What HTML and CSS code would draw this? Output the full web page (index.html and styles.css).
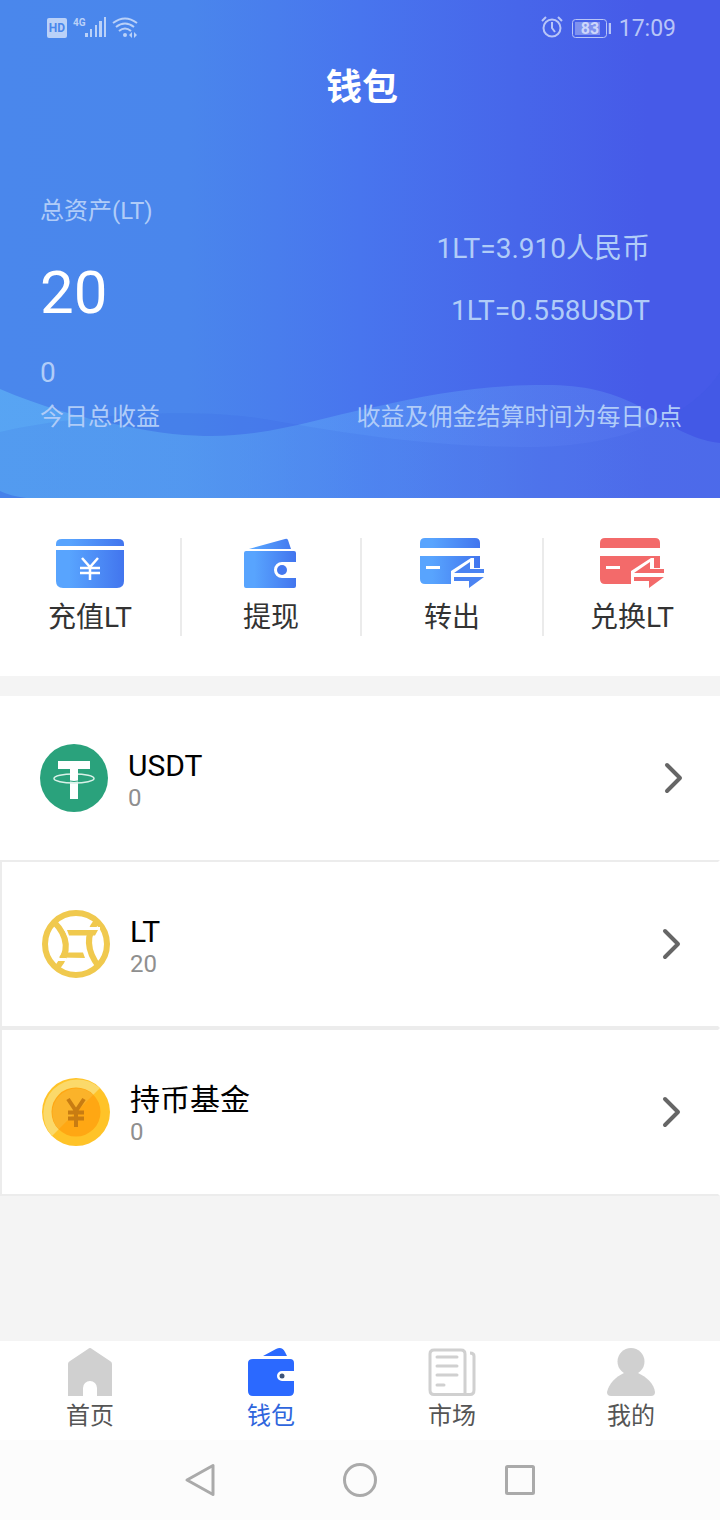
FILE: index.html
```html
<!DOCTYPE html>
<html lang="zh-CN">
<head>
<meta charset="utf-8">
<meta name="viewport" content="width=device-width, initial-scale=1">
<title>钱包</title>
<link rel="stylesheet" href="styles.css">
</head>
<body>
<svg class="defs" width="0" height="0" aria-hidden="true">
  <defs>
    <linearGradient id="blue" x1="0" y1="0" x2="1" y2="0">
      <stop offset="0.2" stop-color="#58a4fe"/><stop offset="1" stop-color="#4275ee"/>
    </linearGradient>
    <linearGradient id="wave" x1="0" y1="0" x2="1" y2="0">
      <stop offset="0" stop-color="#70d8ff" stop-opacity=".36"/>
      <stop offset="0.25" stop-color="#70d0ff" stop-opacity=".36"/>
      <stop offset="0.5" stop-color="#70c8ff" stop-opacity=".28"/>
      <stop offset="0.75" stop-color="#80c8ff" stop-opacity=".2"/>
      <stop offset="1" stop-color="#80c8ff" stop-opacity=".18"/>
    </linearGradient>
  </defs>
</svg>
<header class="hero">
  <svg class="waves" viewBox="0 0 720 130" preserveAspectRatio="none" aria-hidden="true">
    <path fill="url(#wave)" d="M0 21C40 38 80 50 120 57C160 66 190 68 212 68C270 68 320 50 370 40C430 26 480 17 545 17C585 17 610 24 635 36C665 54 690 72 720 75V130H26Q10 128 0 123Z"/>
    <path fill="#304fdd" fill-opacity=".11" d="M0 64C70 48 190 38 270 52C350 66 430 79 530 79C620 79 690 50 720 4V130H0Z"/>
  </svg>
  <div class="statusbar">
    <div class="status-group">
      <svg width="92" height="26" viewBox="0 1 92 26" fill="#bad1f8" aria-hidden="true">
        <rect x="0" y="3" width="20" height="20" rx="2"/>
        <text class="glyph-hd" x="10" y="17" text-anchor="middle">HD</text>
        <text class="glyph-4g" x="26" y="11">4G</text>
        <path d="M38 18h3v4h-3zM43 14h2v8h-2zM48 10h2v12h-2zM52 6h3v16h-3zM57 2h2v20h-2z"/>
        <g fill="none" stroke="#bad1f8" stroke-width="2"><path d="M66 8Q78-1 90 8M69 12Q78 5 87 12M72 16Q78 11 84 16"/></g>
        <circle cx="78" cy="20" r="2"/><path d="M82 20l3-3v6zM90 20l-3-3v6z"/>
      </svg>
    </div>
    <div class="status-group">
      <svg width="70" height="26" viewBox="0 1 70 26" fill="none" stroke="#b8c5f7" aria-hidden="true">
        <circle cx="11" cy="13" r="8.500" stroke-width="2"/><path stroke-width="2" d="M11 7v6l3 4M1 6l4-4M17 2l4 4"/>
        <rect x="31.500" y="4.500" width="34" height="18" rx="3" stroke-width="1"/>
        <rect x="34" y="7" width="25" height="13" fill="#7f92ef" stroke="none"/>
        <text class="glyph-battery" x="49" y="19" text-anchor="middle">83</text>
        <path stroke-width="2.500" d="M69 8v11"/>
      </svg>
      <time>17:09</time>
    </div>
  </div>
  <h1>钱包</h1>
  <div class="assets">
    <div class="total">
      <p class="caption">总资产(LT)</p>
      <p class="amount">20</p>
    </div>
    <div class="rates">
      <p>1LT=3.910人民币</p>
      <p>1LT=0.558USDT</p>
    </div>
  </div>
  <p class="income">0</p>
  <div class="notes"><span>今日总收益</span><span>收益及佣金结算时间为每日0点</span></div>
</header>

<nav class="actions" aria-label="操作">
  <button type="button">
    <svg width="68" height="50" viewBox="0 0 68 50" aria-hidden="true">
      <path fill="url(#blue)" d="M0 8V6Q0 1 6 1H62Q68 1 68 6V8ZM0 12H68V43Q68 50 61 50H7Q0 50 0 43Z"/>
      <path fill="none" stroke="#fff" stroke-width="2.500" d="M26 20l8 9 8-9M24 30h20M24 35h20M34 29v13"/>
    </svg>
    <span>充值LT</span>
  </button>
  <button type="button">
    <svg width="54" height="50" viewBox="0 0 54 50" aria-hidden="true">
      <path fill="url(#blue)" d="M5 11L41 1Q43 0 44 2L47 11ZM2 13H50Q52 13 52 15V24H38A8 8 0 0 0 38 40H52V48Q52 50 50 50H2Q0 50 0 48V15Q0 13 2 13Z"/>
      <circle cx="38" cy="32" r="5" fill="#4478ef"/>
    </svg>
    <span>提现</span>
  </button>
  <button type="button">
    <svg width="64" height="50" viewBox="0 0 64 50" aria-hidden="true">
      <path fill="url(#blue)" d="M0 10V5Q0 0 5 0H55Q60 0 60 5V10ZM0 18H60V30H54V20H51L31 33V46H5Q0 46 0 41ZM6 28V31H20V28Z" fill-rule="evenodd"/>
      <path fill="#4b83f2" d="M34 35L50 24V31H64V35ZM34 39H64L49 50V43H34Z"/>
    </svg>
    <span>转出</span>
  </button>
  <button type="button">
    <svg width="64" height="50" viewBox="0 0 64 50" fill="#f36a6a" aria-hidden="true">
      <path d="M0 10V5Q0 0 5 0H55Q60 0 60 5V10ZM0 18H60V30H54V20H51L31 33V46H5Q0 46 0 41ZM6 28V31H20V28Z" fill-rule="evenodd"/>
      <path d="M34 35L50 24V31H64V35ZM34 39H64L49 50V43H34Z"/>
    </svg>
    <span>兑换LT</span>
  </button>
</nav>

<main class="coins">
  <a class="coin" href="#usdt">
    <svg width="68" height="68" viewBox="0 0 68 68" aria-hidden="true">
      <circle cx="34" cy="34" r="34" fill="#2aa27c"/>
      <path fill="#fff" d="M18 17H50V25H38V55H30V25H18Z"/>
      <ellipse cx="34" cy="34.500" rx="20" ry="4.500" fill="none" stroke="#d9f1e8" stroke-width="1.500"/>
      <path fill="#fff" d="M30 26h8v10h-8z"/>
      <path fill="none" stroke="#2aa27c" stroke-width="1" d="M30 37Q34 38 38 37"/>
    </svg>
    <span class="coin-text"><span class="coin-name">USDT</span><span class="coin-value">0</span></span>
    <svg class="chevron" width="20" height="32" viewBox="0 0 20 32" aria-hidden="true"><path d="M3 3L16 16L3 29"/></svg>
  </a>
  <a class="coin coin-boxed" href="#lt">
    <svg width="68" height="68" viewBox="0 0 68 68" fill="none" stroke="#f0c94e" aria-hidden="true">
      <circle cx="34" cy="34" r="31" stroke-width="6"/>
      <path stroke-width="6" d="M12 12Q34 34 15 58M55 11Q38 32 57 57"/>
      <path stroke="#fff" stroke-width="3" d="M44 18.500H58M12 49.500H24"/>
      <path stroke="#fff" stroke-width="2" d="M22 17L27 27M42 43L46 51"/>
      <path fill="#f0c94e" stroke="none" d="M25 20H56L53 25.500H27ZM17 47.500L20 42.500H41L43 48Z"/>
    </svg>
    <span class="coin-text"><span class="coin-name">LT</span><span class="coin-value">20</span></span>
    <svg class="chevron" width="20" height="32" viewBox="0 0 20 32" aria-hidden="true"><path d="M3 3L16 16L3 29"/></svg>
  </a>
  <a class="coin coin-boxed" href="#fund">
    <svg width="68" height="68" viewBox="0 0 68 68" aria-hidden="true">
      <circle cx="34" cy="34" r="34" fill="#ffc328"/>
      <path fill="#fbd96a" d="M10 58A34 34 0 0 1 58 10Z"/>
      <circle cx="34" cy="34" r="24.500" fill="#ffa713"/>
      <path fill="#fbb32a" d="M16.700 51.300A24.500 24.500 0 0 1 51.300 16.700Z"/>
      <path fill="none" stroke="#c87c12" stroke-width="4" d="M26 21L34 33L42 21M26 34.500H42M26 40.500H42M34 32V49"/>
    </svg>
    <span class="coin-text"><span class="coin-name">持币基金</span><span class="coin-value">0</span></span>
    <svg class="chevron" width="20" height="32" viewBox="0 0 20 32" aria-hidden="true"><path d="M3 3L16 16L3 29"/></svg>
  </a>
</main>

<nav class="tabs" aria-label="主导航">
  <a href="#home">
    <svg width="48" height="48" viewBox="0 0 48 48" fill="#d0d0d0" aria-hidden="true"><path d="M2 16Q2 14 4 13L22 1Q24-1 26 1L44 13Q46 14 46 16V48H31V40A7 7 0 0 0 17 40V48H2Z"/></svg>
    <span>首页</span>
  </a>
  <a class="active" href="#wallet" aria-current="page">
    <svg width="48" height="48" viewBox="0 0 48 48" fill="#2b69ff" aria-hidden="true">
      <path d="M16 8L29 1Q35-2 38 4L40 8ZM6 11H43Q47 11 47 15V23H35A5 5 0 0 0 35 33H47V43Q47 48 42 48H6Q1 48 1 43V15Q1 11 6 11Z"/>
      <circle cx="35" cy="28" r="2.500" fill="#3d5478"/>
    </svg>
    <span>钱包</span>
  </a>
  <a href="#market">
    <svg width="48" height="48" viewBox="0 0 48 48" fill="none" stroke="#d0d0d0" stroke-width="3" aria-hidden="true">
      <path d="M37 46V6Q37 2 33 2H6Q2 2 2 6V42Q2 46.500 6 46.500H42Q46 46.500 46 42V8Q46 5 42 5"/>
      <path stroke-linecap="round" d="M9 9H29M9 18H29M9 27H29M9 37H16"/>
    </svg>
    <span>市场</span>
  </a>
  <a href="#me">
    <svg width="48" height="48" viewBox="0 0 48 48" fill="#d0d0d0" aria-hidden="true">
      <circle cx="24" cy="13.500" r="13.500"/><path d="M17 25H31C40 29 47 36 48 44Q48 48 44 48H4Q0 48 0 44C2 36 8 29 17 25Z"/>
    </svg>
    <span>我的</span>
  </a>
</nav>

<div class="sysnav">
  <button type="button" aria-label="返回"><svg width="34" height="34" viewBox="0 0 34 34" aria-hidden="true"><path d="M30 2.500V31.500L4 17Z"/></svg></button>
  <button type="button" aria-label="主屏幕"><svg width="34" height="34" viewBox="0 0 34 34" aria-hidden="true"><circle cx="17" cy="17" r="15.500"/></svg></button>
  <button type="button" aria-label="最近任务"><svg width="34" height="34" viewBox="0 0 34 34" aria-hidden="true"><rect x="3.500" y="3.500" width="27" height="27" rx="1"/></svg></button>
</div>
</body>
</html>
```
FILE: styles.css
```css
* { box-sizing: border-box; }

body {
  margin: 0;
  min-height: 100vh;
  display: flex;
  flex-direction: column;
  background: #f4f4f4;
  color: #000;
  font-family: Roboto, "Noto Sans CJK SC", sans-serif;
}

h1, p { margin: 0; }
svg { display: block; }
a { color: inherit; text-decoration: none; }
button { border: 0; padding: 0; background: none; color: inherit; font: inherit; }
.defs { position: absolute; }

/* Blue header */
.hero {
  position: relative;
  padding: 16px 38px 65px 40px;
  background: linear-gradient(90deg, #4a87ec 0%, #4a86ec 26%, #4875ee 50%, #4766ea 72%, #465ae8 90%, #465ae8 100%);
  color: #b0ccf8;
}
.waves { position: absolute; left: 0; bottom: 0; width: 100%; height: 130px; }
.hero > :not(.waves) { position: relative; }

.statusbar {
  display: flex;
  justify-content: space-between;
  padding: 0 6px 0 7px;
  color: #b8c5f7;
}
.status-group { display: flex; gap: 8px; align-items: center; }
.statusbar time { font-size: 23px; line-height: 26px; }
.glyph-hd { font: 700 12px Roboto, sans-serif; fill: #4a87ec; }
.glyph-4g { font: 700 10px Roboto, sans-serif; }
.glyph-battery { font: 700 16px Roboto, sans-serif; fill: #cdd6fa; stroke: none; }

.hero h1 {
  margin-top: 22px;
  padding-left: 2px;
  font-size: 36px;
  line-height: 48px;
  text-align: center;
  color: #fff;
}

.assets { display: flex; justify-content: space-between; margin-top: 83px; }
.caption { font-size: 24px; line-height: 32px; }
.amount { margin-top: 28px; font-size: 60px; line-height: 76px; color: #fff; }
.rates { padding: 38px 32px 0 0; font-size: 28px; line-height: 32px; text-align: right; }
.rates p + p { margin-top: 30px; }
.income { margin-top: 24px; font-size: 28px; line-height: 36px; }
.notes { display: flex; justify-content: space-between; margin-top: 10px; font-size: 24px; line-height: 32px; }

/* Quick actions */
.actions {
  display: grid;
  grid-template-columns: 180fr 180fr 182fr 178fr;
  padding: 40px 0;
  background: #fff;
  color: #333;
}
.actions button {
  display: flex;
  flex-direction: column;
  align-items: center;
  gap: 12px;
  height: 98px;
  font-size: 28px;
  line-height: 36px;
}
.actions button + button { border-left: 2px solid #ebebeb; }

/* Coin list */
.coins { flex: 1; margin-top: 20px; }
.coin {
  display: flex;
  align-items: center;
  gap: 20px;
  padding: 48px 36px 48px 40px;
  background: #fff;
}
.coin-boxed { border: 2px solid #ececec; border-right-color: #fff; }
.coin-text { flex: 1; display: flex; flex-direction: column; padding-top: 4px; }
.coin-name { font-size: 30px; line-height: 36px; }
.coin-value { font-size: 24px; line-height: 28px; color: #8f8f8f; }
.chevron { fill: none; stroke: #666; stroke-width: 4; stroke-linecap: round; stroke-linejoin: round; }

/* Tab bar */
.tabs {
  display: grid;
  grid-template-columns: 180fr 182fr 180fr 178fr;
  padding: 7px 0 8px;
  background: #fff;
  color: #555;
}
.tabs a {
  display: flex;
  flex-direction: column;
  align-items: center;
  gap: 4px;
  font-size: 24px;
  line-height: 32px;
}
.tabs .active { color: #2f66dd; }

/* System navigation */
.sysnav {
  display: flex;
  justify-content: center;
  align-items: center;
  gap: 126px;
  height: 80px;
  background: #fcfcfc;
}
.sysnav svg { fill: none; stroke: #aaa; stroke-width: 3; stroke-linejoin: round; }
```
